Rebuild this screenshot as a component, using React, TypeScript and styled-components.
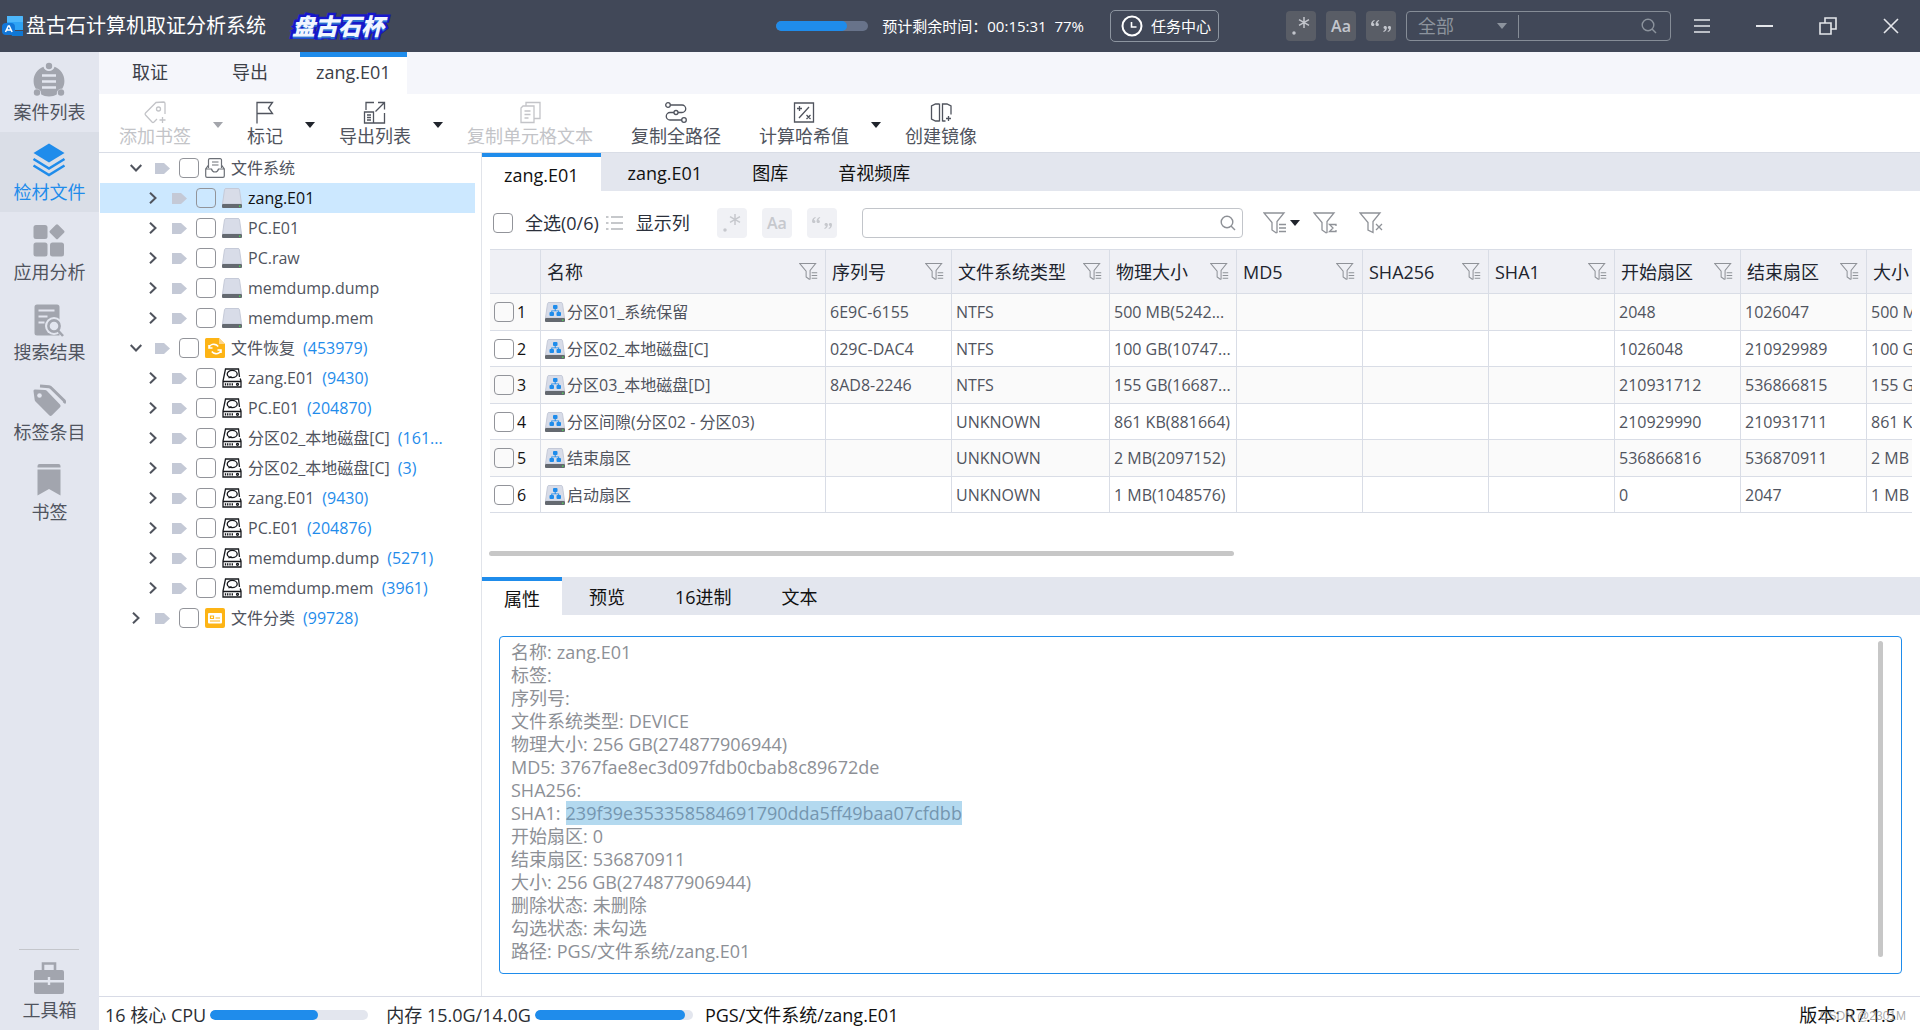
import React from "react";
import styled, { createGlobalStyle, css } from "styled-components";

const BLUE = "#1f8ceb";
const INK = "#50545e";
const LINE = "#d9dde6";

const GlobalStyle = createGlobalStyle`
  *, *::before, *::after { box-sizing: border-box; }
  body {
    margin: 0;
    background: #fff;
    color: ${INK};
    font-family: "Open Sans", "Noto Sans CJK SC", sans-serif;
    font-size: 18px;
    line-height: 24px;
  }
  button, input, select { font: inherit; color: inherit; }
  button { border: 0; padding: 0; background: none; cursor: pointer; }
  svg { display: block; flex: none; }
`;

/* ---------- shell ---------- */

const Shell = styled.div`
  display: flex;
  flex-direction: column;
  height: 100vh;
  overflow: hidden;
`;

const Body = styled.div`
  display: flex;
  flex: 1;
  min-height: 0;
`;

const Workspace = styled.div`
  display: flex;
  flex-direction: column;
  flex: 1;
  min-width: 0;
`;

/* ---------- title bar ---------- */

const TitleBar = styled.header`
  display: flex;
  align-items: center;
  flex: none;
  height: 52px;
  padding: 0 21px 0 2px;
  background: #414858;
  color: #fff;
`;

const AppName = styled.h1`
  margin: 0 26px 0 3px;
  font-size: 20px;
  font-weight: 400;
  white-space: nowrap;
`;

const CupLogo = styled.span`
  color: #f1f6ff;
  font-size: 23px;
  font-style: italic;
  font-weight: 900;
  white-space: nowrap;
  -webkit-text-stroke: 5px #1717c9;
  paint-order: stroke fill;
  text-shadow: 0 2px 0 #2b6fd0;
`;

const Spacer = styled.div`
  flex: 1;
`;

const Meter = styled.div<{ $width: number; $track: string }>`
  flex: none;
  width: ${(p) => p.$width}px;
  height: 10px;
  border-radius: 5px;
  background: ${(p) => p.$track};
  overflow: hidden;
`;

const MeterFill = styled.div`
  height: 100%;
  border-radius: 5px;
  background: ${BLUE};
`;

const TimeLeft = styled.span`
  margin: 0 26px 0 14px;
  font-size: 15px;
  white-space: pre;
`;

const TaskCenter = styled.button`
  display: flex;
  align-items: center;
  gap: 8px;
  height: 32px;
  margin-right: 67px;
  padding: 0 7px 0 10px;
  border: 1px solid #8d95a0;
  border-radius: 5px;
  font-size: 15px;
  white-space: nowrap;
`;

const MatchToggles = styled.div<{ $gap: number }>`
  display: flex;
  gap: ${(p) => p.$gap}px;
`;

const MatchButton = styled.button<{ $dark?: boolean }>`
  display: grid;
  place-items: center;
  width: 30px;
  height: 30px;
  border-radius: 4px;
  font-size: 16px;
  background: ${(p) => (p.$dark ? "#595d66" : "#f0f1f5")};
  color: ${(p) => (p.$dark ? "#c3c6cd" : "#c6c8cd")};
  font-weight: 600;
`;

const GlobalSearch = styled.div`
  display: flex;
  align-items: center;
  width: 265px;
  height: 30px;
  margin: 0 23px 0 10px;
  padding-right: 13px;
  border: 1px solid #868d97;
  border-radius: 4px;
  color: #8c939d;
`;

const ScopeField = styled.div`
  display: flex;
  align-items: center;
  width: 112px;
  height: 23px;
  padding-right: 11px;
  border-right: 1px solid #868d97;
`;

const ScopeSelect = styled.select`
  flex: 1;
  min-width: 0;
  padding: 0 0 0 11px;
  border: 0;
  outline: 0;
  background: transparent;
  appearance: none;
`;

const PlainInput = styled.input`
  flex: 1;
  min-width: 0;
  padding: 0 8px;
  border: 0;
  outline: 0;
  background: transparent;
`;

const WindowButtons = styled.div`
  display: flex;
  align-items: center;
  gap: 46px;
  color: #e4e6ea;
`;

/* ---------- side navigation ---------- */

const SideNav = styled.nav`
  display: flex;
  flex-direction: column;
  flex: none;
  width: 99px;
  background: #e3e6ef;
`;

const NavButton = styled.button<{ $active?: boolean }>`
  display: flex;
  flex-direction: column;
  align-items: center;
  gap: 2px;
  height: 80px;
  padding-top: 10px;
  background: ${(p) => (p.$active ? "#dadee7" : "transparent")};
  color: ${(p) => (p.$active ? BLUE : INK)};
`;

const NavIcon = styled.span<{ $active?: boolean }>`
  margin-right: 2px;
  color: ${(p) => (p.$active ? BLUE : "#a2a5ae")};
`;

const NavRule = styled.hr`
  width: 60px;
  margin: auto 19px 0;
  border: 0;
  border-top: 1px solid #c4c6cb;
`;

/* ---------- document tabs and toolbar ---------- */

const DocTabs = styled.div`
  display: flex;
  flex: none;
  height: 42px;
  padding-left: 1px;
  background: #f5f6fb;
`;

const DocTab = styled.button<{ $active?: boolean }>`
  min-width: 100px;
  padding: 0 16px 8px;
  border-top: 5px solid ${(p) => (p.$active ? BLUE : "transparent")};
  background: ${(p) => (p.$active ? "#fff" : "transparent")};
  color: #3c4048;
`;

const Toolbar = styled.div`
  display: flex;
  flex: none;
  height: 59px;
  padding-left: 1px;
  border-bottom: 1px solid ${LINE};
`;

const ToolButton = styled.button`
  display: flex;
  flex-direction: column;
  align-items: center;
  justify-content: flex-start;
  padding: 5px 19px 0;
  white-space: nowrap;
  line-height: 22px;
  &:disabled { color: #c3c4c8; }
`;

const ToolMenuButton = styled.button`
  display: flex;
  align-items: center;
  width: 18px;
  padding: 4px 0 0 3px;
  color: #20242c;
  &:disabled { color: #a3a5ab; }
`;

/* ---------- tree ---------- */

const Panes = styled.div`
  display: flex;
  flex: 1;
  min-height: 0;
`;

const Tree = styled.ul`
  flex: none;
  width: 383px;
  margin: 0;
  padding: 0 6px 0 1px;
  border-right: 1px solid #e1e4ea;
  list-style: none;
  font-size: 16px;
`;

const TreeRow = styled.li<{ $level: number; $selected?: boolean }>`
  display: flex;
  align-items: center;
  height: 30px;
  padding-left: ${(p) => 30 + p.$level * 17}px;
  white-space: nowrap;
  ${(p) => p.$selected && css`background: #cce8ff; color: #111;`}
`;

const Expander = styled.button`
  margin-right: 13px;
  color: ${INK};
`;

const CheckLabel = styled.label`
  display: flex;
  align-items: center;
`;

const CheckBox = styled.input.attrs({ type: "checkbox" })`
  appearance: none;
  flex: none;
  width: 20px;
  height: 20px;
  margin: 0;
  border: 1px solid #92949a;
  border-radius: 4px;
  background: transparent;
  &:checked { background: ${BLUE}; }
`;

const TreeCheck = styled(CheckBox)`
  margin: 0 6px 0 9px;
`;

const TreeName = styled.span`
  margin-left: 6px;
`;

const TreeCount = styled.span`
  margin-left: 8px;
  color: ${BLUE};
`;

/* ---------- list pane ---------- */

const Content = styled.main`
  display: flex;
  flex-direction: column;
  flex: 1;
  min-width: 0;
`;

const PaneTabs = styled.div`
  display: flex;
  flex: none;
  height: 38px;
  background: #e3e6ee;
`;

const PaneTab = styled.button<{ $active?: boolean }>`
  margin-right: ${(p) => (p.$active ? 2 : 0)}px;
  padding: ${(p) => (p.$active ? "1px 22px 0" : "0 25px 2px")};
  border-top: 4px solid ${(p) => (p.$active ? BLUE : "transparent")};
  background: ${(p) => (p.$active ? "#fff" : "transparent")};
  color: #111;
`;

const FilterBar = styled.div`
  display: flex;
  align-items: center;
  flex: none;
  height: 58px;
  padding: 5px 11px 0;
  color: #2b303b;
  white-space: nowrap;
`;

const SelectAll = styled(CheckLabel)`
  gap: 12px;
  margin-right: 7px;
`;

const ColumnsButton = styled.button`
  display: flex;
  align-items: center;
  gap: 13px;
  margin-right: 27px;
`;

const ListSearch = styled.div`
  display: flex;
  align-items: center;
  width: 381px;
  height: 30px;
  margin: 0 20px 0 25px;
  padding-right: 6px;
  border: 1px solid #c2c5ca;
  border-radius: 4px;
  color: #8d9096;
`;

const FunnelButton = styled.button`
  display: flex;
  align-items: center;
  gap: 3px;
  margin-right: 13px;
  color: #20242c;
  & + & { margin-right: 22px; }
`;

const TableFrame = styled.div`
  flex: none;
  margin: 0 8px;
  overflow: hidden;
`;

const Grid = styled.table`
  width: 1503px;
  border-collapse: separate;
  border-spacing: 0;
  table-layout: fixed;
  font-size: 16px;
`;

const HeadCell = styled.th<{ $width: number }>`
  width: ${(p) => p.$width}px;
  height: 45px;
  padding: 0 7px 0 6px;
  border: solid ${LINE};
  border-width: 1px 1px 1px 0;
  background: #eff0f5;
  color: #20242e;
  font-size: 18px;
  font-weight: 400;
  text-align: left;
`;

const HeadInner = styled.div`
  display: flex;
  align-items: center;
  justify-content: space-between;
  white-space: nowrap;
`;

const GridRow = styled.tr`
  height: 36px;
  &:nth-child(odd) { height: 37px; background: #fafafa; }
`;

const Cell = styled.td`
  padding: 0 0 0 4px;
  border: solid ${LINE};
  border-width: 0 1px 1px 0;
  overflow: hidden;
  white-space: nowrap;
`;

const CellLine = styled.div`
  display: flex;
  align-items: center;
  gap: 2px;
`;

const RowCheck = styled(CheckLabel)`
  gap: 3px;
  color: #111;
`;

const HorizontalTrack = styled.div`
  flex: none;
  margin: 38px 8px 21px 7px;
`;

const HorizontalThumb = styled.div`
  height: 5px;
  border-radius: 3px;
  background: #c7c7c7;
`;

/* ---------- properties pane ---------- */

const PropertyBox = styled.section`
  display: flex;
  flex: 1;
  justify-content: space-between;
  min-height: 0;
  margin: 21px 18px 22px 17px;
  padding: 4px 18px 16px 11px;
  border: 1px solid ${BLUE};
  border-radius: 4px;
  color: #8d9096;
`;

const PropertyList = styled.dl`
  margin: 0;
  line-height: 23px;
`;

const PropertyRow = styled.div`
  display: flex;
  gap: 5px;
  white-space: nowrap;
`;

const PropertyValue = styled.dd`
  margin: 0;
`;

const Highlight = styled.mark`
  background: #b3d9ef;
  color: #7596b0;
`;

const VerticalThumb = styled.div`
  width: 5px;
  border-radius: 3px;
  background: #c7c7c7;
`;

/* ---------- status bar ---------- */

const StatusBar = styled.footer`
  display: flex;
  align-items: center;
  flex: none;
  height: 34px;
  padding: 3px 14px 0 6px;
  border-top: 1px solid #d8dbe6;
  color: #2b2e34;
  white-space: nowrap;
`;

const StatusItem = styled.div`
  display: flex;
  align-items: center;
  gap: 4px;
  margin-right: 18px;
`;

const StatusPath = styled.span`
  margin-left: -6px;
  color: #111;
`;

const Version = styled.div`
  position: relative;
  margin-right: 10px;
  color: #111;
`;

const Watermark = styled.span`
  position: absolute;
  right: -10px;
  top: 4px;
  color: rgba(150, 150, 150, 0.8);
  font-family: "Liberation Sans", sans-serif;
  font-size: 12px;
  line-height: 18px;
`;

/* ---------- icons ---------- */

const Caret = () => (
  <svg width="10" height="6" viewBox="0 0 10 6"><path d="M0 0h10L5 6z" fill="currentColor" /></svg>
);

const Magnifier = () => (
  <svg width="16" height="16" viewBox="0 0 16 16" fill="none" stroke="currentColor" strokeWidth="1.4">
    <circle cx="7" cy="7" r="5.8" /><path d="M11 11l4 4" />
  </svg>
);

const AppIcon = () => (
  <svg width="21" height="22" viewBox="0 0 21 22">
    <path d="M5 1h15a1 1 0 0 1 1 1v13H5z" fill="#2ea3f5" />
    <path d="M5 1h15a1 1 0 0 1 1 1v5H5z" fill="#4db7fb" />
    <path d="M8 16h13v5H10z" fill="#0f78d4" />
    <rect x="0" y="8" width="13" height="12" rx="4" fill="#1277d8" />
    <path d="M3.500 17l2.800-6h1l2.800 6M5 15h4" fill="none" stroke="#fff" strokeWidth="1.500" />
  </svg>
);

const ClockIcon = () => (
  <svg width="22" height="22" viewBox="0 0 22 22" fill="none" stroke="#fff" strokeWidth="2">
    <circle cx="11" cy="11" r="9.500" /><path d="M10.500 7v5h5" strokeWidth="1.600" />
  </svg>
);

const RegexGlyph = () => (
  <svg width="20" height="20" viewBox="0 0 20 20" fill="none" stroke="currentColor" strokeWidth="1.500">
    <path d="M13 1v11M8 3.700l10 5.600M18 3.700L8 9.300" /><circle cx="3" cy="17" r="1" fill="currentColor" />
  </svg>
);

const QuoteGlyph = () => (
  <svg width="20" height="20" viewBox="0 0 20 20" fill="currentColor">
    <path d="M3.500 4C1.500 4.500 0 6 0 8.200 0 9.400.8 10 1.700 10c1 0 1.700-.7 1.700-1.600S2.800 7 2 6.900C2.100 6 2.700 5.200 3.700 4.900zM8 4C6 4.500 4.500 6 4.500 8.200c0 1.200.8 1.800 1.700 1.800 1 0 1.700-.7 1.700-1.600S7.300 7 6.500 6.900C6.600 6 7.200 5.200 8.200 4.900z" />
    <path d="M12.500 16c2-.5 3.400-2 3.400-4.200 0-1.200-.8-1.800-1.700-1.800-1 0-1.700.7-1.700 1.600s.6 1.400 1.400 1.500c-.1.900-.7 1.700-1.600 2zM16.800 16c2-.5 3.200-2 3.200-4.200 0-1.200-.6-1.800-1.500-1.800-1 0-1.700.7-1.700 1.600s.6 1.400 1.400 1.500c-.1.900-.7 1.700-1.600 2z" />
  </svg>
);

const Funnel = ({ mark, size = 24 }: { mark: "lines" | "sigma" | "cross"; size?: number }) => (
  <svg width={size} height={size} viewBox="0 0 24 24" fill="none" stroke="#8f9298" strokeWidth="1.300">
    <path d={mark === "cross" ? "M14 13v8.500l-5-2.500v-7.500L1 2h20l-7 8.500z" : "M13 21.800L9 19v-7.500L1 2h20l-7 8.500v11z"} />
    {mark === "lines" && <path d="M16 13.500h7M16 17h7M16 20.500h7" />}
    {mark === "sigma" && <path d="M23 15v-1.500h-6.500l3.500 3.500-3.500 3.500H23V19" />}
    {mark === "cross" && <path d="M17 13l6 6M23 13l-6 6" />}
  </svg>
);

const Chevron = ({ open }: { open?: boolean }) => (
  <svg width="12" height="12" viewBox="0 0 12 12" fill="none" stroke="currentColor" strokeWidth="2">
    <path d={open ? "M0.700 3L6 8.500 11.300 3" : "M3 0.700L8.500 6 3 11.300"} />
  </svg>
);

const TagMark = () => (
  <svg width="15" height="11" viewBox="0 0 15 11"><path d="M0 0h9l6 5.500L9 11H0z" fill="#c4c9d6" /></svg>
);

const DriveIcon = ({ partition }: { partition?: boolean }) => (
  <svg width="20" height="20" viewBox="0 0 20 20">
    <path d="M4 .5h12a1.500 1.500 0 0 1 1.500 1.200L19.500 16H.5L2.500 1.700A1.500 1.500 0 0 1 4 .5z" fill="#d8dce8" stroke="#c5cad8" />
    <rect y="16" width="20" height="4" rx="1" fill="#646970" />
    <rect x="17" y="17.500" width="1.500" height="1.500" fill="#52c95a" />
    {partition && (
      <g fill={BLUE}>
        <rect x="8" y="3" width="4.500" height="4" rx="1" />
        <rect x="4.500" y="10" width="4.500" height="4" rx="1" />
        <rect x="11.500" y="10" width="4.500" height="4" rx="1" />
        <path d="M9.700 6h1v2.500h3.500V11h-1V9.300H7.300V11h-1V8.500h3.400z" />
      </g>
    )}
  </svg>
);

const DiskIcon = () => (
  <svg width="20" height="20" viewBox="0 0 20 20" fill="none" stroke="#16181c" strokeWidth="1.300">
    <path d="M17.500 9L16.500 1h-13L1 13v6h18v-6l-.8-2.500M1 13.500h18" />
    <ellipse cx="10.200" cy="6" rx="5" ry="3.600" /><path d="M6.500 10l3-1.500" />
    <path d="M3.500 15.300v2.200M5.700 15.300v2.200M8 15.300v2.200M10.300 15.300v2.200" /><circle cx="15.500" cy="16.300" r="1" />
  </svg>
);

const InboxIcon = () => (
  <svg width="20" height="20" viewBox="0 0 20 20" fill="none" stroke="#6c7077" strokeWidth="1.200">
    <path d="M3.500 10V2a1.300 1.300 0 0 1 1.300-1.300h10.400A1.300 1.300 0 0 1 16.500 2v8M7 4h6.500M7 7h6.500M3.500 7L.7 11v7a1.300 1.300 0 0 0 1.300 1.300h16a1.300 1.300 0 0 0 1.300-1.300v-7l-2.800-4M.7 11h5.800c.5 2 1.500 3 3.500 3s3-1 3.500-3h5.800" />
  </svg>
);

const RecoverIcon = () => (
  <svg width="20" height="20" viewBox="0 0 20 20" fill="none">
    <path d="M1.500 0H14l6 6v12.500a1.500 1.500 0 0 1-1.500 1.500h-17A1.500 1.500 0 0 1 0 18.500v-17A1.500 1.500 0 0 1 1.500 0z" fill="#fdb415" />
    <path d="M14 0l6 6h-6z" fill="#fdd68a" />
    <path d="M4 10c.5-2.500 3-4 5.500-3.600 1.600.2 2.800 1 3.700 2.100M16 12c-.5 2.500-3 4-5.500 3.600-1.600-.2-2.800-1-3.700-2.100M4 7v3h3.500M16 15v-3h-3.500" stroke="#fff" strokeWidth="1.600" />
  </svg>
);

const CategoryIcon = () => (
  <svg width="20" height="20" viewBox="0 0 20 20" fill="none">
    <rect width="20" height="20" rx="2" fill="#fdb415" />
    <rect x="3" y="5" width="14" height="10.500" rx="1" fill="#fff" />
    <path d="M5.500 8h3v2.500h-3zM10.500 10h4.500M5 13h10" stroke="#fdb415" strokeWidth="1.200" />
  </svg>
);

const navIcons: Record<string, React.ReactNode> = {
  cases: (
    <svg width="34" height="36" viewBox="0 0 34 36" fill="currentColor">
      <circle cx="17" cy="4" r="3.200" />
      <path d="M11.500 4.800C5.500 7 1.600 12.500 1.600 19c0 3 .8 5.600 2.200 7.800 3.500-.3 6 2.500 5.200 5.500 2.400 1.400 5 2.200 8 2.200s5.600-.8 8-2.200c-.8-3 1.700-5.800 5.200-5.500 1.400-2.200 2.200-4.800 2.200-7.800 0-6.500-3.900-12-9.900-14.200-.4 2.500-2.700 4.200-5.500 4.200s-5.100-1.700-5.500-4.200z" />
      <circle cx="5" cy="30.500" r="3.200" /><circle cx="29" cy="30.500" r="3.200" />
      <path d="M10 13.500h14M10 19.500h14M10 25.500h14" stroke="#e3e6ef" strokeWidth="2.600" />
    </svg>
  ),
  files: (
    <svg width="34" height="36" viewBox="0 0 34 36" fill="none" stroke="currentColor" strokeWidth="2.600">
      <path d="M17 1.500L32.500 11 17 20.500 1.500 11z" fill="currentColor" stroke="none" />
      <path d="M1.500 17L17 26.500 32.500 17M1.500 23.500L17 33l15.500-9.500" />
    </svg>
  ),
  apps: (
    <svg width="34" height="36" viewBox="0 0 34 36" fill="currentColor">
      <rect x="1.500" y="3" width="14" height="14" rx="2.500" /><rect x="1.500" y="20.500" width="14" height="14" rx="2.500" />
      <rect x="18" y="20.500" width="14" height="14" rx="2.500" />
      <rect x="19.300" y="4" width="11.500" height="11.500" rx="1.500" transform="rotate(45 25 9.700)" />
    </svg>
  ),
  search: (
    <svg width="34" height="36" viewBox="0 0 34 36" fill="none">
      <path d="M5 2.500h20A2.500 2.500 0 0 1 27.500 5v28.500H5A2.500 2.500 0 0 1 2.500 31V5A2.500 2.500 0 0 1 5 2.500z" fill="currentColor" />
      <path d="M6.500 8.500h16M6.500 14.500h9M6.500 20.500h6" stroke="#e3e6ef" strokeWidth="2.200" />
      <circle cx="22" cy="24" r="9" fill="#e3e6ef" /><circle cx="22" cy="24" r="5.600" stroke="currentColor" strokeWidth="2.600" />
      <path d="M26 28.500l5 5.500" stroke="currentColor" strokeWidth="2.600" />
    </svg>
  ),
  tags: (
    <svg width="34" height="36" viewBox="0 0 34 36" fill="none">
      <path d="M3 7.500l10 .5c.8 0 1.500.4 2 1L28 22.500a2 2 0 0 1 0 2.800l-8 8a2 2 0 0 1-2.800 0L3.500 19.500A3 3 0 0 1 2.700 18L1.500 9A1.400 1.400 0 0 1 3 7.500z" fill="currentColor" />
      <circle cx="7.500" cy="13.500" r="2.300" fill="#e3e6ef" />
      <path d="M8 4l9 .7a3 3 0 0 1 2 1L32 18.500a2 2 0 0 1 0 2.600" stroke="currentColor" strokeWidth="3" />
    </svg>
  ),
  bookmark: (
    <svg width="34" height="36" viewBox="0 0 34 36" fill="currentColor">
      <path d="M5.500 4a2 2 0 0 1 2-2h19a2 2 0 0 1 2 2v1.500h-23zM5.500 7.500h23v26L17 27 5.500 33.500z" />
    </svg>
  ),
  toolbox: (
    <svg width="34" height="36" viewBox="0 0 34 36" fill="none">
      <path d="M11 11V3.500h12V11" stroke="currentColor" strokeWidth="2.600" />
      <path d="M4 10h26a2 2 0 0 1 2 2v8H2v-8a2 2 0 0 1 2-2zM2 22.500h30V32a2 2 0 0 1-2 2H4a2 2 0 0 1-2-2z" fill="currentColor" />
      <path d="M17 17v8" stroke="#e3e6ef" strokeWidth="2.400" />
    </svg>
  ),
};

const ToolIcon = ({ children }: { children: React.ReactNode }) => (
  <svg width="24" height="26" viewBox="0 0 24 26" fill="none" stroke="currentColor" strokeWidth="1.300">{children}</svg>
);

const toolIcons: Record<string, React.ReactNode> = {
  bookmark: (
    <ToolIcon>
      <path d="M14 20l-3 3a1.500 1.500 0 0 1-2 0L2.500 16a1.500 1.500 0 0 1 0-2L13 3.500l7.500-.5c1 0 1.500.5 1.500 1.500V15" />
      <circle cx="15.500" cy="10" r="2" /><path d="M19.500 18v6M16.500 21h6" />
    </ToolIcon>
  ),
  flag: <ToolIcon><path d="M4 24.500V3.500h15.500l-4 5.500 4 5.500H4" /></ToolIcon>,
  exportList: (
    <ToolIcon>
      <path d="M3 11V3.500h8M15 3.500h6.500v7M21.500 3.500l-9 9M21.500 14v10H11" />
      <path d="M1.500 13h9v11h-9zM4 16h4M4 18.500h4M4 21h4" />
    </ToolIcon>
  ),
  copy: (
    <ToolIcon>
      <path d="M8 7V3.500h14v16h-6" /><path d="M5 7h11v16.500H3V9zM6.500 12h6M6.500 15.500h6M6.500 19h4" />
    </ToolIcon>
  ),
  path: (
    <ToolIcon>
      <circle cx="4" cy="6" r="2.300" /><circle cx="20" cy="21" r="2.300" /><circle cx="12" cy="13.500" r="2" />
      <path d="M6.300 6H18a3.700 3.700 0 0 1 0 7.500h-4M10 13.500H6A3.700 3.700 0 0 0 6 21h11.700" />
    </ToolIcon>
  ),
  hash: (
    <ToolIcon>
      <path d="M2.500 4h19v19h-19zM17 8L7 19M5 9.500h5M7.500 7v5M14.500 16l4 4M18.500 16l-4 4" />
    </ToolIcon>
  ),
  image: (
    <ToolIcon>
      <path d="M10.500 4.500v18M10 5H6.500L2.500 7v13l4 2h4M13.500 22.500V5h4.500l4 2v8.500M13.500 22h3M19.500 17v5M17 19.500h5" />
    </ToolIcon>
  ),
};

/* ---------- data ---------- */

const navItems = [
  { icon: "cases", label: "案件列表" },
  { icon: "files", label: "检材文件", active: true },
  { icon: "apps", label: "应用分析" },
  { icon: "search", label: "搜索结果" },
  { icon: "tags", label: "标签条目" },
  { icon: "bookmark", label: "书签" },
];

const tools = [
  { icon: "bookmark", label: "添加书签", menu: true, disabled: true },
  { icon: "flag", label: "标记", menu: true },
  { icon: "exportList", label: "导出列表", menu: true },
  { icon: "copy", label: "复制单元格文本", disabled: true },
  { icon: "path", label: "复制全路径" },
  { icon: "hash", label: "计算哈希值", menu: true },
  { icon: "image", label: "创建镜像" },
];

type Node = { level: number; icon: "inbox" | "drive" | "recover" | "disk" | "category"; name: string; count?: string; open?: boolean; selected?: boolean };

const nodes: Node[] = [
  { level: 0, icon: "inbox", name: "文件系统", open: true },
  { level: 1, icon: "drive", name: "zang.E01", selected: true },
  { level: 1, icon: "drive", name: "PC.E01" },
  { level: 1, icon: "drive", name: "PC.raw" },
  { level: 1, icon: "drive", name: "memdump.dump" },
  { level: 1, icon: "drive", name: "memdump.mem" },
  { level: 0, icon: "recover", name: "文件恢复", count: "(453979)", open: true },
  { level: 1, icon: "disk", name: "zang.E01", count: "(9430)" },
  { level: 1, icon: "disk", name: "PC.E01", count: "(204870)" },
  { level: 1, icon: "disk", name: "分区02_本地磁盘[C]", count: "(161..." },
  { level: 1, icon: "disk", name: "分区02_本地磁盘[C]", count: "(3)" },
  { level: 1, icon: "disk", name: "zang.E01", count: "(9430)" },
  { level: 1, icon: "disk", name: "PC.E01", count: "(204876)" },
  { level: 1, icon: "disk", name: "memdump.dump", count: "(5271)" },
  { level: 1, icon: "disk", name: "memdump.mem", count: "(3961)" },
  { level: 0, icon: "category", name: "文件分类", count: "(99728)" },
];

const nodeIcons = {
  inbox: <InboxIcon />,
  drive: <DriveIcon />,
  recover: <RecoverIcon />,
  disk: <DiskIcon />,
  category: <CategoryIcon />,
};

const columns = [
  { label: "名称", width: 285 },
  { label: "序列号", width: 126 },
  { label: "文件系统类型", width: 158 },
  { label: "物理大小", width: 127 },
  { label: "MD5", width: 126 },
  { label: "SHA256", width: 126 },
  { label: "SHA1", width: 126 },
  { label: "开始扇区", width: 126 },
  { label: "结束扇区", width: 126 },
  { label: "大小", width: 126 },
];

const rows = [
  ["分区01_系统保留", "6E9C-6155", "NTFS", "500 MB(5242...", "", "", "", "2048", "1026047", "500 MB"],
  ["分区02_本地磁盘[C]", "029C-DAC4", "NTFS", "100 GB(10747...", "", "", "", "1026048", "210929989", "100 GB"],
  ["分区03_本地磁盘[D]", "8AD8-2246", "NTFS", "155 GB(16687...", "", "", "", "210931712", "536866815", "155 GB"],
  ["分区间隙(分区02 - 分区03)", "", "UNKNOWN", "861 KB(881664)", "", "", "", "210929990", "210931711", "861 KB"],
  ["结束扇区", "", "UNKNOWN", "2 MB(2097152)", "", "", "", "536866816", "536870911", "2 MB"],
  ["启动扇区", "", "UNKNOWN", "1 MB(1048576)", "", "", "", "0", "2047", "1 MB"],
];

const properties: { label: string; value: string; marked?: boolean }[] = [
  { label: "名称", value: "zang.E01" },
  { label: "标签", value: "" },
  { label: "序列号", value: "" },
  { label: "文件系统类型", value: "DEVICE" },
  { label: "物理大小", value: "256 GB(274877906944)" },
  { label: "MD5", value: "3767fae8ec3d097fdb0cbab8c89672de" },
  { label: "SHA256", value: "" },
  { label: "SHA1", value: "239f39e353358584691790dda5ff49baa07cfdbb", marked: true },
  { label: "开始扇区", value: "0" },
  { label: "结束扇区", value: "536870911" },
  { label: "大小", value: "256 GB(274877906944)" },
  { label: "删除状态", value: "未删除" },
  { label: "勾选状态", value: "未勾选" },
  { label: "路径", value: "PGS/文件系统/zang.E01" },
];

/* ---------- parts ---------- */

const MatchOptions = ({ dark, gap }: { dark?: boolean; gap: number }) => (
  <MatchToggles $gap={gap}>
    <MatchButton $dark={dark} aria-label="正则表达式"><RegexGlyph /></MatchButton>
    <MatchButton $dark={dark} aria-label="区分大小写">Aa</MatchButton>
    <MatchButton $dark={dark} aria-label="全词匹配"><QuoteGlyph /></MatchButton>
  </MatchToggles>
);

const ProgressMeter = ({ value, width, track, label }: { value: number; width: number; track: string; label: string }) => (
  <Meter $width={width} $track={track} role="progressbar" aria-label={label} aria-valuenow={value}>
    <MeterFill style={{ width: `${value}%` }} />
  </Meter>
);

const Header = () => (
  <TitleBar>
    <AppIcon />
    <AppName>盘古石计算机取证分析系统</AppName>
    <CupLogo>盘古石杯</CupLogo>
    <Spacer />
    <ProgressMeter value={77} width={92} track="#68738a" label="任务进度" />
    <TimeLeft>预计剩余时间：00:15:31  77%</TimeLeft>
    <TaskCenter><ClockIcon />任务中心</TaskCenter>
    <MatchOptions dark gap={10} />
    <GlobalSearch>
      <ScopeField>
        <ScopeSelect aria-label="搜索范围"><option>全部</option></ScopeSelect>
        <Caret />
      </ScopeField>
      <PlainInput aria-label="全局搜索" />
      <Magnifier />
    </GlobalSearch>
    <WindowButtons>
      <button aria-label="菜单">
        <svg width="16" height="16" viewBox="0 0 16 16"><path d="M0 2h16M0 8h16M0 14h16" stroke="currentColor" strokeWidth="1.600" /></svg>
      </button>
      <button aria-label="最小化">
        <svg width="17" height="16" viewBox="0 0 17 16"><path d="M0 8h17" stroke="currentColor" strokeWidth="2" /></svg>
      </button>
      <button aria-label="还原">
        <svg width="18" height="18" viewBox="0 0 18 18" fill="none" stroke="currentColor" strokeWidth="1.600"><path d="M1 6h11v11H1zM6 6V1h11v11h-5" /></svg>
      </button>
      <button aria-label="关闭">
        <svg width="16" height="16" viewBox="0 0 16 16"><path d="M1 1l14 14M15 1L1 15" stroke="currentColor" strokeWidth="1.600" /></svg>
      </button>
    </WindowButtons>
  </TitleBar>
);

const ResourceTree = () => (
  <Tree>
    {nodes.map((n, i) => (
      <TreeRow key={i} $level={n.level} $selected={n.selected}>
        <Expander aria-label="展开"><Chevron open={n.open} /></Expander>
        <TagMark />
        <CheckLabel>
          <TreeCheck />
          {nodeIcons[n.icon]}
          <TreeName>{n.name}</TreeName>
        </CheckLabel>
        {n.count && <TreeCount>{n.count}</TreeCount>}
      </TreeRow>
    ))}
  </Tree>
);

const PartitionTable = () => (
  <TableFrame>
    <Grid>
      <thead>
        <tr>
          <HeadCell $width={51} aria-label="选择" />
          {columns.map((c) => (
            <HeadCell key={c.label} $width={c.width}>
              <HeadInner>{c.label}<button aria-label="筛选"><Funnel mark="lines" size={19} /></button></HeadInner>
            </HeadCell>
          ))}
        </tr>
      </thead>
      <tbody>
        {rows.map((r, i) => (
          <GridRow key={i}>
            <Cell><RowCheck><CheckBox />{i + 1}</RowCheck></Cell>
            {r.map((value, j) => (
              <Cell key={j}>
                {j === 0 ? <CellLine><DriveIcon partition />{value}</CellLine> : value}
              </Cell>
            ))}
          </GridRow>
        ))}
      </tbody>
    </Grid>
  </TableFrame>
);

export default function App() {
  return (
    <Shell>
      <GlobalStyle />
      <Header />
      <Body>
        <SideNav>
          {navItems.map((n) => (
            <NavButton key={n.icon} $active={n.active}>
              <NavIcon $active={n.active}>{navIcons[n.icon]}</NavIcon>
              {n.label}
            </NavButton>
          ))}
          <NavRule />
          <NavButton>
            <NavIcon>{navIcons.toolbox}</NavIcon>
            工具箱
          </NavButton>
        </SideNav>
        <Workspace>
          <DocTabs>
            <DocTab>取证</DocTab>
            <DocTab>导出</DocTab>
            <DocTab $active>zang.E01</DocTab>
          </DocTabs>
          <Toolbar>
            {tools.map((t) => (
              <React.Fragment key={t.icon}>
                <ToolButton disabled={t.disabled}>{toolIcons[t.icon]}{t.label}</ToolButton>
                {t.menu && <ToolMenuButton disabled={t.disabled} aria-label="更多"><Caret /></ToolMenuButton>}
              </React.Fragment>
            ))}
          </Toolbar>
          <Panes>
            <ResourceTree />
            <Content>
              <PaneTabs>
                <PaneTab $active>zang.E01</PaneTab>
                <PaneTab>zang.E01</PaneTab>
                <PaneTab>图库</PaneTab>
                <PaneTab>音视频库</PaneTab>
              </PaneTabs>
              <FilterBar>
                <SelectAll><CheckBox />全选(0/6)</SelectAll>
                <ColumnsButton>
                  <svg width="17" height="16" viewBox="0 0 17 16" stroke="#b4b6bb" strokeWidth="1.400"><path d="M0 2h2.500M5 2h12M0 8h2.500M5 8h12M0 14h2.500M5 14h12" /></svg>
                  显示列
                </ColumnsButton>
                <MatchOptions gap={15} />
                <ListSearch><PlainInput aria-label="列表搜索" /><Magnifier /></ListSearch>
                <FunnelButton aria-label="筛选"><Funnel mark="lines" /><Caret /></FunnelButton>
                <FunnelButton aria-label="汇总筛选"><Funnel mark="sigma" /></FunnelButton>
                <FunnelButton aria-label="清除筛选"><Funnel mark="cross" /></FunnelButton>
              </FilterBar>
              <PartitionTable />
              <HorizontalTrack><HorizontalThumb style={{ width: `${(745 / 1423) * 100}%` }} /></HorizontalTrack>
              <PaneTabs>
                <PaneTab $active>属性</PaneTab>
                <PaneTab>预览</PaneTab>
                <PaneTab>16进制</PaneTab>
                <PaneTab>文本</PaneTab>
              </PaneTabs>
              <PropertyBox>
                <PropertyList>
                  {properties.map((p) => (
                    <PropertyRow key={p.label}>
                      <dt>{p.label}:</dt>
                      <PropertyValue>{p.marked ? <Highlight>{p.value}</Highlight> : p.value}</PropertyValue>
                    </PropertyRow>
                  ))}
                </PropertyList>
                <VerticalThumb />
              </PropertyBox>
            </Content>
          </Panes>
          <StatusBar>
            <StatusItem>16 核心 CPU<ProgressMeter value={68} width={158} track="#e3e6ee" label="CPU" /></StatusItem>
            <StatusItem>内存 15.0G/14.0G<ProgressMeter value={95} width={158} track="#e3e6ee" label="内存" /></StatusItem>
            <StatusPath>PGS/文件系统/zang.E01</StatusPath>
            <Spacer />
            <Version>版本: R7.1.5<Watermark>CSDN @2301M</Watermark></Version>
          </StatusBar>
        </Workspace>
      </Body>
    </Shell>
  );
}
